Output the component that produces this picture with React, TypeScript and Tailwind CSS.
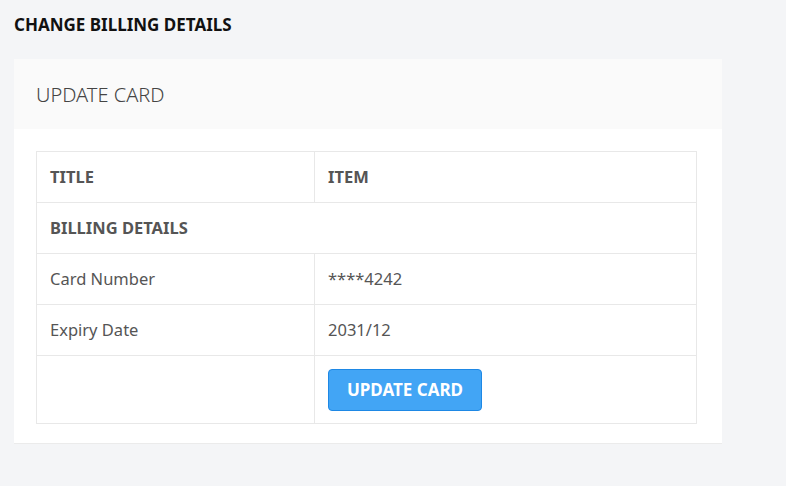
import React from "react";

const font = { fontFamily: '"Noto Sans", "Open Sans", Arial, sans-serif' };

export default function App() {
  return (
    <div className="min-h-[486px] w-full bg-[#f4f5f7] px-[14px] pt-[13px]" style={font}>
      <h1 className="h-[24px] text-[17px] font-bold leading-[24px] text-[#111]">CHANGE BILLING DETAILS</h1>
      <div className="mt-[22px] w-[708px] border-b border-[#ebebeb] bg-white">
        <div className="flex h-[70px] items-center bg-[#fafafa] pl-[22px] pt-[2px] text-[20px] font-light text-[#444]">
          UPDATE CARD
        </div>
        <div className="px-[22px] pb-[19px] pt-[22px]">
          <table className="w-[661px] border-collapse text-[16.5px] text-[#555]">
            <tbody>
              <tr className="h-[51px]">
                <td className="w-[278px] border border-[#e8e8e8] pl-[13px] font-bold">TITLE</td>
                <td className="border border-[#e8e8e8] pl-[13px] font-bold">ITEM</td>
              </tr>
              <tr className="h-[51px]">
                <td colSpan={2} className="border border-[#e8e8e8] pl-[13px] font-bold">BILLING DETAILS</td>
              </tr>
              <tr className="h-[51px]">
                <td className="border border-[#e8e8e8] pl-[13px]">Card Number</td>
                <td className="border border-[#e8e8e8] pl-[13px]">****4242</td>
              </tr>
              <tr className="h-[51px]">
                <td className="border border-[#e8e8e8] pl-[13px]">Expiry Date</td>
                <td className="border border-[#e8e8e8] pl-[13px]">2031/12</td>
              </tr>
              <tr className="h-[68px]">
                <td className="border border-[#e8e8e8]"></td>
                <td className="border border-[#e8e8e8] pl-[13px]">
                  <button className="flex h-[42px] w-[154px] items-center justify-center rounded-[4px] border border-[#1e88e5] bg-[#42a5f5] text-[17px] font-bold text-white">
                    UPDATE CARD
                  </button>
                </td>
              </tr>
            </tbody>
          </table>
        </div>
      </div>
    </div>
  );
}
